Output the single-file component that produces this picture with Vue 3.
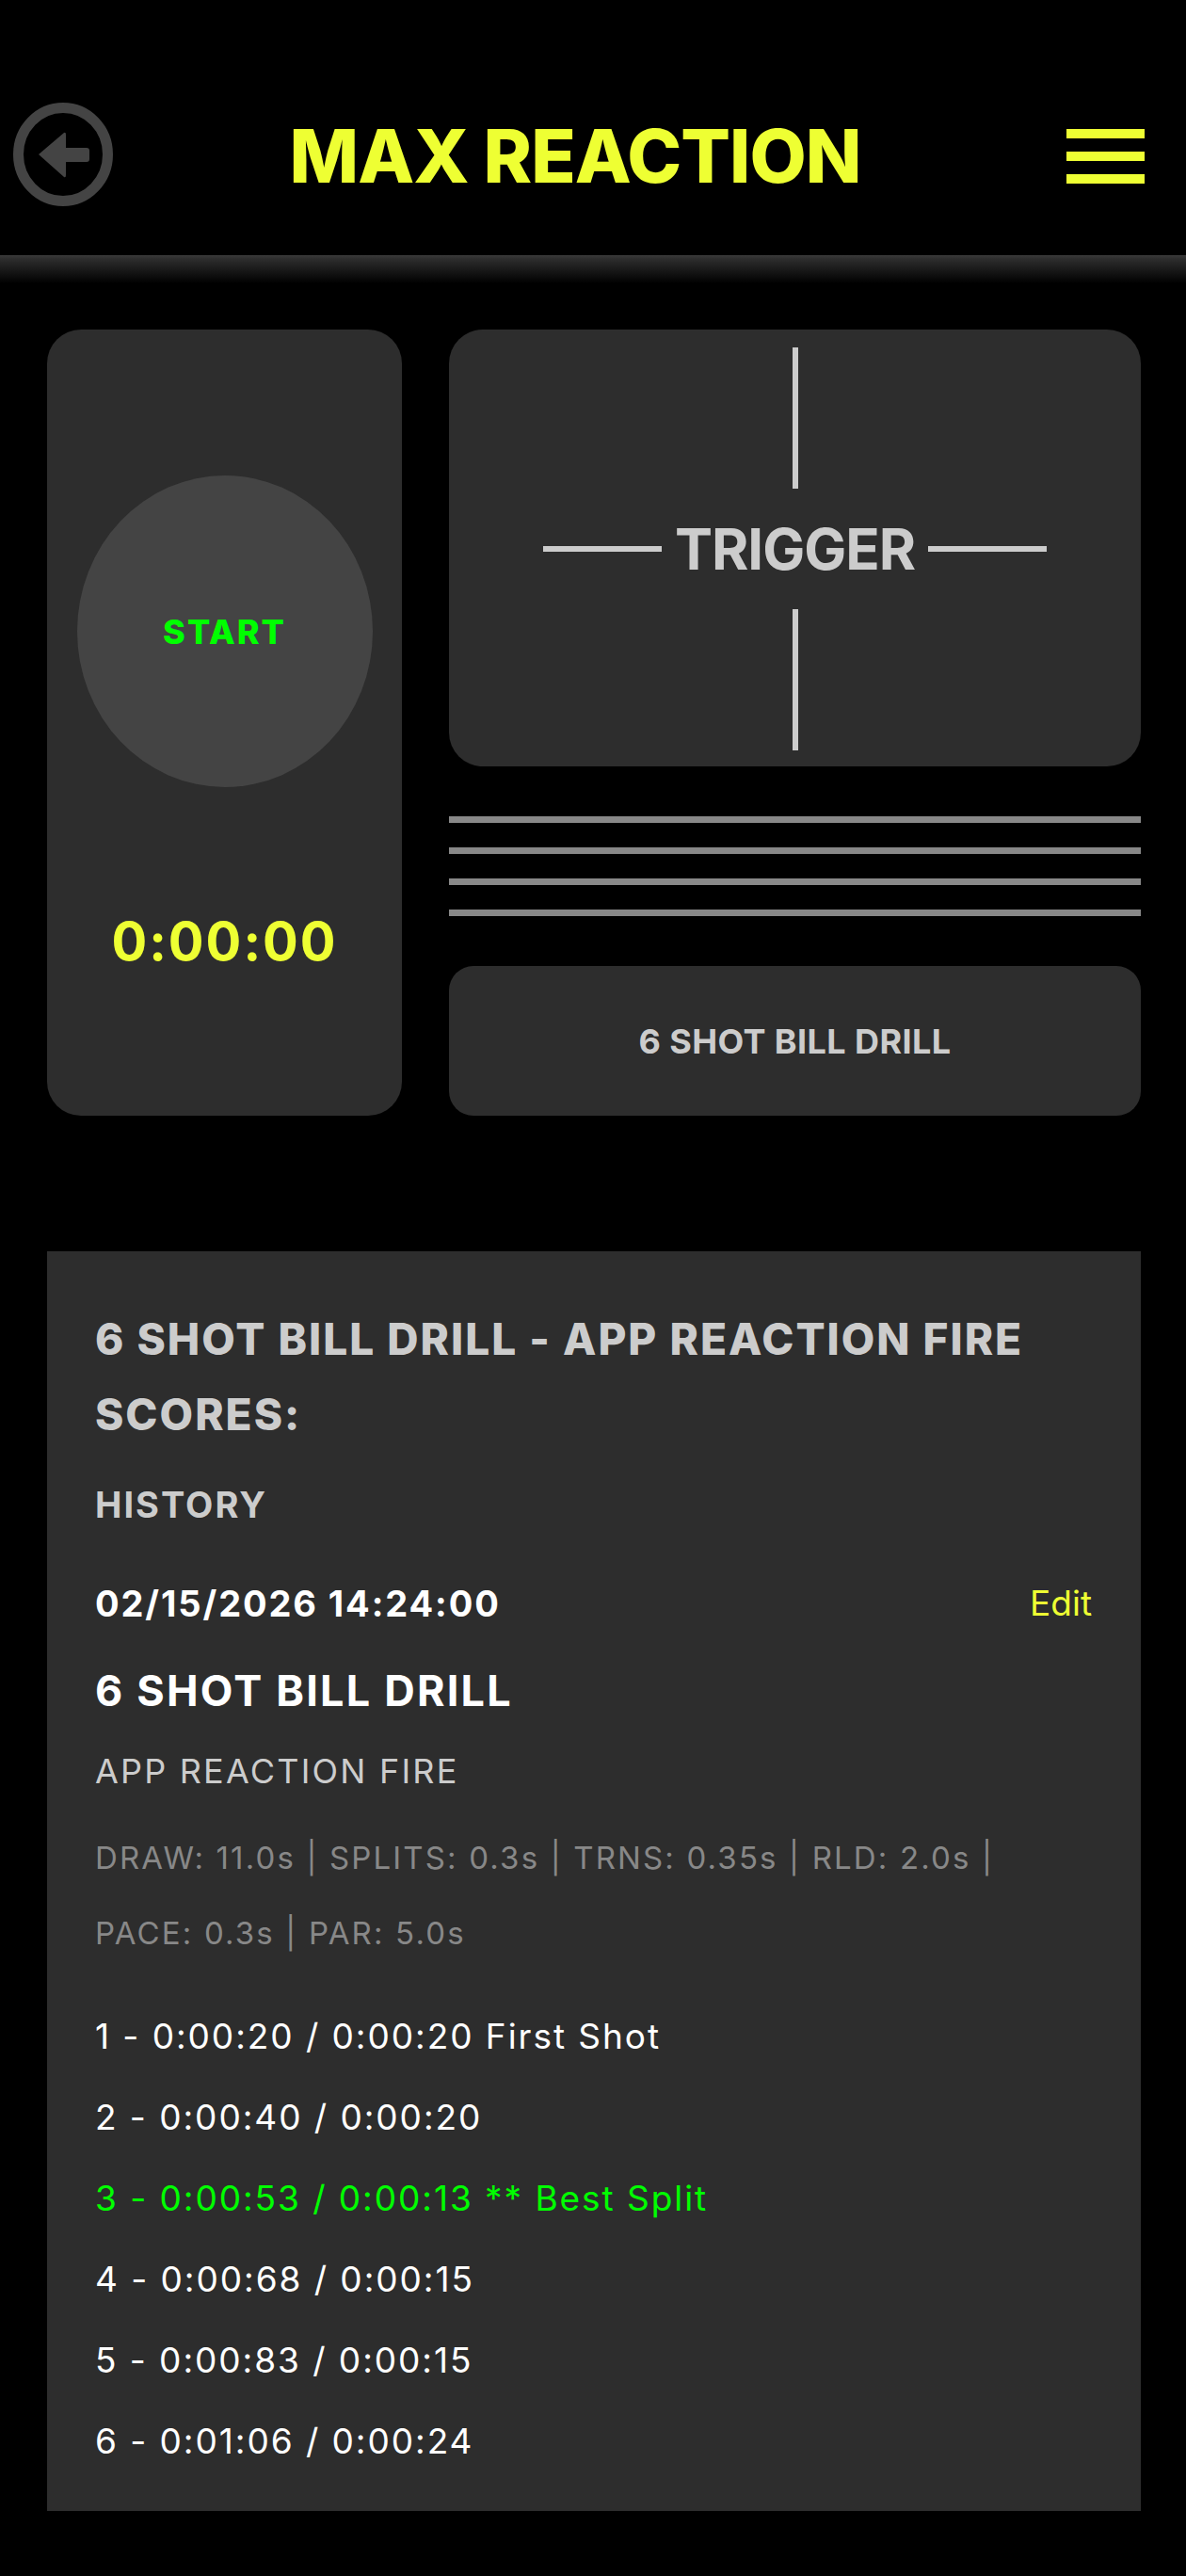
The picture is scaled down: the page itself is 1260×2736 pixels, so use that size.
<script setup>
const shots = [
  { text: '1 - 0:00:20 / 0:00:20 First Shot' },
  { text: '2 - 0:00:40 / 0:00:20' },
  { text: '3 - 0:00:53 / 0:00:13 ** Best Split', best: true },
  { text: '4 - 0:00:68 / 0:00:15' },
  { text: '5 - 0:00:83 / 0:00:15' },
  { text: '6 - 0:01:06 / 0:00:24' }
]
</script>

<template>
  <div class="page">
    <header class="header">
      <svg class="back" viewBox="0 0 106 110" width="106" height="110">
        <ellipse cx="53" cy="55" rx="47.5" ry="49.5" fill="none" stroke="#444" stroke-width="11" />
        <path d="M27 55 L54 32 Q56 31 56 34 V48 H78 Q81 48 81 51 V60 Q81 63 78 63 H56 V77 Q56 80 54 79 Z" fill="#444" />
      </svg>
      <h1 class="title">MAX REACTION</h1>
      <div class="burger">
        <span></span>
        <span></span>
        <span></span>
      </div>
    </header>
    <div class="rule"></div>

    <section class="controls">
      <div class="timer-card">
        <div class="start">START</div>
        <div class="clock">0:00:00</div>
      </div>
      <div class="right">
        <div class="trigger">
          <span class="tick v"></span>
          <div class="mid">
            <span class="tick h"></span>
            <span class="trigger-label">TRIGGER</span>
            <span class="tick h"></span>
          </div>
          <span class="tick v"></span>
        </div>
        <div class="stripes">
          <span></span>
          <span></span>
          <span></span>
          <span></span>
        </div>
        <div class="drill">6 SHOT BILL DRILL</div>
      </div>
    </section>

    <section class="panel">
      <h2 class="panel-title">6 SHOT BILL DRILL - APP REACTION FIRE SCORES:</h2>
      <h3 class="history">HISTORY</h3>
      <div class="date-row">
        <span class="date">02/15/2026 14:24:00</span>
        <span class="edit">Edit</span>
      </div>
      <div class="drill-name">6 SHOT BILL DRILL</div>
      <div class="mode">APP REACTION FIRE</div>
      <p class="params">DRAW: 11.0s | SPLITS: 0.3s | TRNS: 0.35s | RLD: 2.0s | PACE: 0.3s | PAR: 5.0s</p>
      <ul class="shots">
        <li v-for="shot in shots" :key="shot.text" :class="{ best: shot.best }">{{ shot.text }}</li>
      </ul>
    </section>
  </div>
</template>

<style>
html, body {
  background: #000;
  margin: 0;
}
</style>

<style scoped>
.page {
  width: 1260px;
  height: 2736px;
  background: #000;
  font-family: Inter, "Liberation Sans", sans-serif;
  overflow: hidden;
}
.header {
  height: 271px;
  box-sizing: border-box;
  padding: 109px 44px 0 14px;
  display: flex;
  align-items: flex-start;
  justify-content: space-between;
}
.back {
  display: block;
}
.title {
  margin: 2px 31px 0 0;
  height: 110px;
  line-height: 110px;
  font-size: 78px;
  font-weight: 800;
  letter-spacing: -1px;
  color: #eeff33;
}
.burger {
  width: 83px;
  margin-top: 28px;
  display: flex;
  flex-direction: column;
  gap: 14px;
}
.burger span {
  height: 10px;
  background: #eeff33;
}
.rule {
  height: 40px;
  background: linear-gradient(#3a3a3a 0, #2d2d2d 4px, #000 30px);
}
.controls {
  margin: 39px 48px 0 50px;
  display: grid;
  grid-template-columns: 377px 735px;
  column-gap: 50px;
  height: 835px;
}
.timer-card {
  background: #2d2d2d;
  border-radius: 36px;
  display: flex;
  flex-direction: column;
  align-items: center;
  padding-top: 155px;
}
.start {
  width: 314px;
  height: 331px;
  border-radius: 50%;
  background: #444;
  color: #00ff00;
  font-size: 36px;
  font-weight: 800;
  letter-spacing: 2px;
  display: flex;
  align-items: center;
  justify-content: center;
}
.clock {
  margin-top: 130px;
  color: #eeff33;
  font-size: 56px;
  font-weight: 700;
  letter-spacing: 2px;
}
.right {
  display: flex;
  flex-direction: column;
}
.trigger {
  height: 464px;
  background: #2d2d2d;
  border-radius: 36px;
  display: flex;
  flex-direction: column;
  align-items: center;
  justify-content: space-between;
  padding: 19px 0 17px;
  box-sizing: border-box;
}
.mid {
  display: flex;
  align-items: center;
  gap: 14px;
}
.tick {
  background: #ccc;
  display: block;
}
.tick.v {
  width: 6px;
  height: 150px;
}
.tick.h {
  width: 126px;
  height: 6px;
}
.trigger-label {
  color: #ccc;
  font-size: 60px;
  font-weight: 700;
  letter-spacing: -1px;
}
.stripes {
  margin-top: 53px;
  display: flex;
  flex-direction: column;
  gap: 26px;
}
.stripes span {
  height: 7px;
  background: #888;
}
.drill {
  margin-top: 53px;
  height: 159px;
  background: #2d2d2d;
  border-radius: 26px;
  color: #ccc;
  font-size: 36px;
  font-weight: 700;
  letter-spacing: 0.4px;
  display: flex;
  align-items: center;
  justify-content: center;
}
.panel {
  margin: 144px 48px 0 50px;
  height: 1338px;
  box-sizing: border-box;
  background: #2d2d2d;
  padding: 53px 52px 0 51px;
}
.panel-title {
  margin: 0;
  color: #ccc;
  font-size: 46px;
  font-weight: 800;
  line-height: 80px;
  letter-spacing: 2px;
}
.history {
  margin: 26px 0 0;
  color: #ccc;
  font-size: 38px;
  font-weight: 700;
  line-height: 60px;
  letter-spacing: 2px;
}
.date-row {
  margin-top: 45px;
  display: flex;
  justify-content: space-between;
  align-items: center;
  line-height: 60px;
}
.date {
  color: #fff;
  font-size: 38px;
  font-weight: 700;
  letter-spacing: 1.9px;
}
.edit {
  color: #eeff33;
  font-size: 37px;
}
.drill-name {
  margin-top: 33px;
  color: #fff;
  font-size: 45px;
  font-weight: 700;
  line-height: 60px;
  letter-spacing: 2.2px;
}
.mode {
  margin-top: 25px;
  color: #ccc;
  font-size: 36px;
  line-height: 60px;
  letter-spacing: 2.2px;
}
.params {
  margin: 22px 0 0;
  color: #888;
  font-size: 33px;
  line-height: 80px;
  letter-spacing: 2.15px;
}
.shots {
  list-style: none;
  margin: 27px 0 0;
  padding: 0;
}
.shots li {
  color: #fff;
  font-size: 37px;
  line-height: 86px;
  letter-spacing: 1.95px;
}
.shots li.best {
  color: #00ff00;
}
</style>
